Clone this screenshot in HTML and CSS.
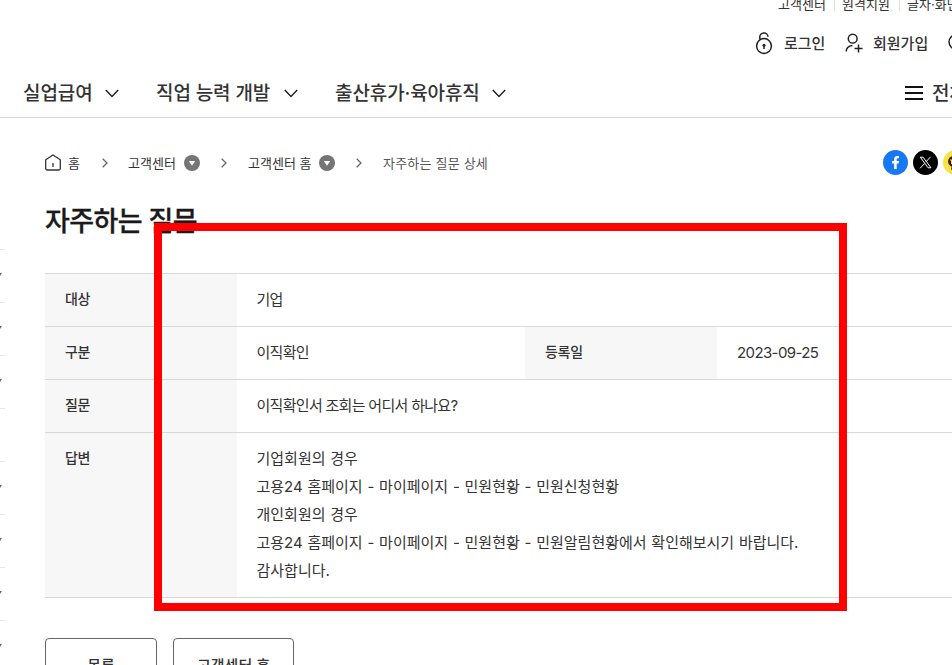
FILE: index.html
```html
<!DOCTYPE html>
<html lang="ko">
<head>
  <meta charset="UTF-8">
  <title>자주하는 질문</title>
  <link rel="stylesheet" href="styles.css">
</head>
<body>
  <header>
    <div class="util">
      <a>고객센터</a>
      <a>원격지원</a>
      <a>글자·화면</a>
    </div>
    <div class="member">
      <a class="login">
        <svg width="18" height="23" viewBox="0 0 18 23"><circle cx="9" cy="14" r="7.4"/><path d="M4.8 7.5V5.2a4.1 4.1 0 0 1 8.2-.4"/><circle cx="9" cy="13.3" r="1.5" class="fill"/><path d="M9 13v4"/></svg>
        <span>로그인</span>
      </a>
      <a class="join">
        <svg width="18" height="20" viewBox="0 0 18 20"><circle cx="7.7" cy="5.7" r="4.4"/><path d="M1.2 18.6c0-3.3 2.1-5.7 6.2-6.2M9.5 15.5h8M13.5 11.5v8"/></svg>
        <span>회원가입</span>
      </a>
      <svg class="search" width="18" height="18" viewBox="0 0 18 18"><circle cx="8" cy="8" r="7"/></svg>
    </div>
    <nav>
      <a class="menu1">실업급여</a>
      <svg class="down" width="14" height="9" viewBox="0 0 14 9"><path d="M.8 1l6.2 6.5L13.2 1"/></svg>
      <a class="menu2">직업 능력 개발</a>
      <svg class="down" width="14" height="9" viewBox="0 0 14 9"><path d="M.8 1l6.2 6.5L13.2 1"/></svg>
      <a class="menu3">출산휴가·육아휴직</a>
      <svg class="down" width="14" height="9" viewBox="0 0 14 9"><path d="M.8 1l6.2 6.5L13.2 1"/></svg>
      <svg class="bars" width="18" height="14" viewBox="0 0 18 14"><path d="M0 1h18M0 7h18M0 13h18"/></svg>
      <a class="all">전체메뉴</a>
    </nav>
  </header>

  <div class="container">
    <aside>
      <div class="side"><i></i></div>
      <div class="side"><i></i></div>
      <div class="side"><i></i></div>
      <div class="side"></div>
      <div class="side"><i></i></div>
      <div class="side"><i></i></div>
      <div class="side"><i></i></div>
      <div class="side"><i></i></div>
    </aside>

    <main>
      <div class="location">
        <svg class="home" width="16" height="17" viewBox="0 0 16 17"><path d="M.7 5.8L8 1l7.3 4.8v8.7a1.5 1.5 0 0 1-1.5 1.5H2.2a1.5 1.5 0 0 1-1.5-1.5zM8 9v4"/></svg>
        <span class="loc-home">홈</span>
        <svg class="next" width="6" height="10" viewBox="0 0 6 10"><path d="M.7.7L5 5 .7 9.3"/></svg>
        <span class="loc-center">고객센터</span>
        <svg class="more" width="16" height="16" viewBox="0 0 16 16"><circle cx="8" cy="8" r="8"/><path d="M4.8 6h6.4L8 10.8z"/></svg>
        <svg class="next" width="6" height="10" viewBox="0 0 6 10"><path d="M.7.7L5 5 .7 9.3"/></svg>
        <span class="loc-main">고객센터 홈</span>
        <svg class="more" width="16" height="16" viewBox="0 0 16 16"><circle cx="8" cy="8" r="8"/><path d="M4.8 6h6.4L8 10.8z"/></svg>
        <svg class="next" width="6" height="10" viewBox="0 0 6 10"><path d="M.7.7L5 5 .7 9.3"/></svg>
        <span class="loc-now">자주하는 질문 상세</span>
        <div class="sns">
          <svg width="25" height="25" viewBox="0 0 25 25"><circle cx="12.5" cy="12.5" r="12.5" fill="#1877f2"/><path fill="#fff" d="M11.1 19v-5.4H9v-2.5h2.1V9.3c0-2.2 1.3-3.3 3.2-3.3.8 0 1.4.1 1.7.1v2.2h-1.2c-.9 0-1.1.5-1.1 1.2v1.6h2.3l-.4 2.5h-1.9V19z"/></svg>
          <svg width="25" height="25" viewBox="0 0 25 25"><circle cx="12.5" cy="12.5" r="12.5" fill="#000"/><path fill="none" stroke="#fff" d="M7.3 7.2h2.8l7.8 10.6h-2.8zM17.6 6.8l-4.7 5.1M11.6 13.4l-4.5 4.9"/></svg>
          <svg width="25" height="25" viewBox="0 0 25 25"><circle cx="12.5" cy="12.5" r="12.5" fill="#f9e245"/><ellipse cx="12.5" cy="11.5" rx="7.5" ry="6" fill="#391b1b"/><path fill="#391b1b" d="M9 15l-1 5 5-3z"/><path fill="none" stroke="#f9e245" d="M7 10h3M8.5 10v4"/></svg>
        </div>
      </div>

      <h1>자주하는 질문</h1>

      <div class="table">
        <div class="row">
          <div class="th">대상</div>
          <div class="td">기업</div>
        </div>
        <div class="row">
          <div class="th">구분</div>
          <div class="td half">이직확인</div>
          <div class="th">등록일</div>
          <div class="td date">2023-09-25</div>
        </div>
        <div class="row">
          <div class="th">질문</div>
          <div class="td">이직확인서 조회는 어디서 하나요?</div>
        </div>
        <div class="row answer">
          <div class="th">답변</div>
          <div class="td">
            기업회원의 경우<br>
            고용24 홈페이지 - 마이페이지 - 민원현황 - 민원신청현황<br>
            개인회원의 경우<br>
            고용24 홈페이지 - 마이페이지 - 민원현황 - 민원알림현황에서 확인해보시기 바랍니다.<br>
            감사합니다.
          </div>
        </div>
      </div>

      <div class="buttons">
        <a class="btn list">목록</a>
        <a class="btn center">고객센터 홈</a>
      </div>
    </main>
  </div>

  <div class="mark"></div>
</body>
</html>
```

FILE: styles.css
```css
* {
  box-sizing: border-box;
}

body {
  margin: 0;
  width: 952px;
  height: 665px;
  overflow: hidden;
  position: relative;
  background: #fff;
  color: #333;
  font-family: Inter, "Noto Sans CJK KR", sans-serif;
  font-size: 15px;
  white-space: nowrap;
}

svg {
  flex: none;
  display: block;
}

/* Header */
header {
  height: 118px;
  border-bottom: 1px solid #d8d8d8;
  overflow: hidden;
}

header svg {
  fill: none;
  stroke: #222;
  stroke-width: 1.5;
}

header .fill {
  fill: #222;
  stroke: none;
}

.util {
  display: flex;
  height: 11px;
  padding-left: 778px;
  font-size: 13px;
  line-height: 9px;
}

.util a {
  flex: none;
  width: 57px;
  border-right: 1px solid #e0e0e0;
}

.util a + a {
  width: 65px;
  padding-left: 7px;
}

.util a:last-child {
  border: 0;
}

.member {
  display: flex;
  align-items: center;
  height: 64px;
  padding-left: 755px;
  font-weight: 500;
}

.member a {
  display: flex;
  align-items: center;
  flex: none;
}

.member span {
  padding-bottom: 2px;
}

.login {
  width: 90px;
  gap: 11px;
}

.join {
  width: 103px;
  gap: 10px;
}

nav {
  display: flex;
  align-items: center;
  height: 36px;
  padding-left: 23px;
  font-size: 19px;
  font-weight: 500;
  letter-spacing: -0.1px;
}

nav a {
  flex: none;
  padding-bottom: 3px;
}

.menu1 {
  width: 82px;
}

.menu2 {
  width: 128px;
  margin-left: 37px;
}

.menu3 {
  width: 157px;
  margin-left: 37px;
}

nav .bars {
  margin-left: 399px;
  stroke: #111;
  stroke-width: 2;
}

.all {
  margin-left: 9px;
}

/* Content */
.container {
  display: flex;
}

aside {
  width: 5px;
  flex: none;
  margin-top: 131px;
  overflow: hidden;
}

.side {
  height: 53px;
  padding-top: 23px;
  border-top: 1px solid #e8e8e8;
}

.side i {
  display: block;
  width: 0;
  margin-left: -2px;
  border: 2px solid transparent;
  border-top: 3px solid #666;
}

main {
  flex: none;
  width: 947px;
  padding-left: 40px;
}

/* Breadcrumb */
.location {
  display: flex;
  align-items: center;
  height: 25px;
  margin-top: 32px;
  font-size: 13px;
}

.location span {
  flex: none;
  padding-bottom: 1px;
}

.home {
  fill: none;
  stroke: #333;
  stroke-width: 1.3;
}

.loc-home {
  width: 34px;
  margin-left: 7px;
}

.next {
  fill: none;
  stroke: #666;
  stroke-width: 1.3;
}

.loc-center {
  width: 56px;
  margin-left: 20px;
}

.more {
  margin-right: 21px;
}

.more circle {
  fill: #757575;
}

.more path {
  fill: #fff;
}

.loc-main {
  width: 71px;
  margin-left: 21px;
}

.loc-now {
  width: 119px;
  margin-left: 21px;
  color: #555;
  letter-spacing: 0.2px;
}

.sns {
  display: flex;
  gap: 5px;
  margin-left: 381px;
}

h1 {
  margin: 27px 0 0;
  height: 71px;
  color: #1a1a1a;
  font-size: 27px;
  font-weight: 500;
  line-height: 40px;
  letter-spacing: -0.6px;
  -webkit-text-stroke: 0.3px #1a1a1a;
}

/* Table */
.table {
  border-top: 1px solid #d8d8d8;
}

.row {
  display: flex;
  height: 53px;
  border-bottom: 1px solid #d8d8d8;
  line-height: 28px;
}

.th {
  flex: none;
  width: 192px;
  padding: 11px 20px;
  background: #f7f7f7;
  font-size: 14px;
  font-weight: 500;
  letter-spacing: -0.3px;
}

.td {
  padding: 12px 19.5px;
  letter-spacing: -0.7px;
}

.half {
  width: 288px;
}

.date {
  padding-left: 20px;
  letter-spacing: -0.6px;
}

.answer {
  height: 165px;
}

.answer .td {
  letter-spacing: 0;
  word-spacing: 0.55px;
}

/* Buttons */
.buttons {
  display: flex;
  gap: 16px;
  margin-top: 40px;
}

.btn {
  height: 56px;
  border: 1px solid #666;
  border-radius: 4px;
  font-weight: 500;
  line-height: 54px;
  text-align: center;
}

.list {
  width: 112px;
}

.center {
  width: 121px;
}

/* Red highlight box */
.mark {
  position: absolute;
  left: 154px;
  top: 223px;
  width: 693px;
  height: 388px;
  border: 8px solid #f00;
}
```
